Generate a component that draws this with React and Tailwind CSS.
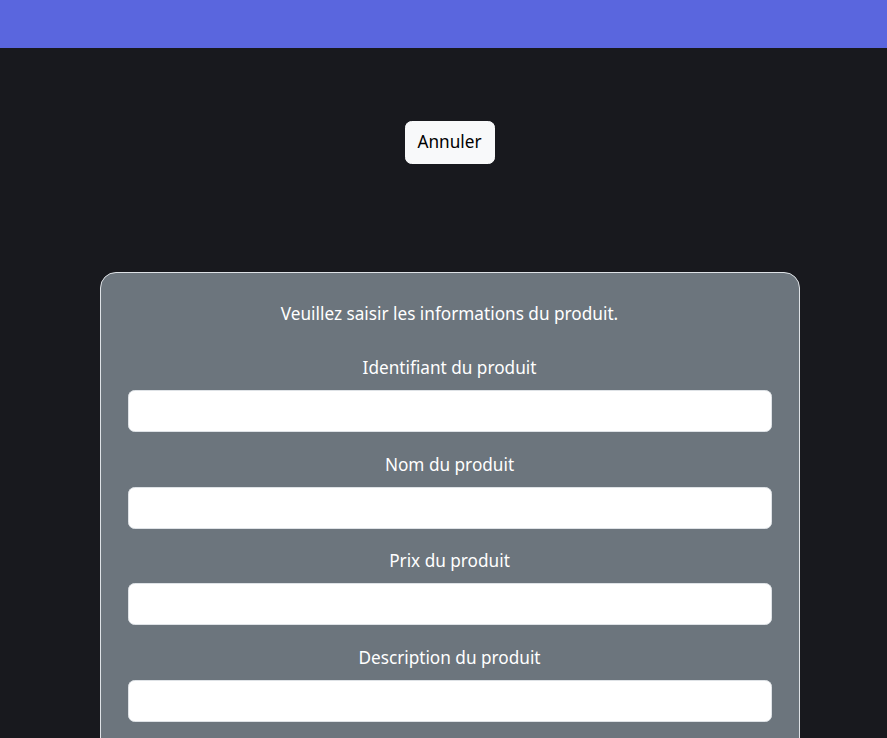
export default function App() {
  const fields = [
    "Identifiant du produit",
    "Nom du produit",
    "Prix du produit",
    "Description du produit",
  ];
  return (
    <div
      className="min-h-[738px] bg-[#18191e] text-[17.2px] leading-[26.4px]"
      style={{ fontFamily: '"Noto Sans", sans-serif' }}
    >
      <div className="h-[48px] bg-[#5a66de]" />
      <div className="pl-[12px]">
        <div className="flex justify-center pt-[73px]">
          <button className="h-[42.5px] w-[90px] rounded-[6.6px] bg-[#f8f9fa] text-[#000] border border-[#f8f9fa]">
            Annuler
          </button>
        </div>
        <div className="mt-[108.5px] mx-auto w-[700px] rounded-[16px] border border-[#dee2e6] bg-[#6c757d] px-[27px] pt-[28px] pb-[60px] text-white text-center">
          <p className="mb-[27.6px]">Veuillez saisir les informations du produit.</p>
          {fields.map((f) => (
            <div key={f} className="mb-[19.3px]">
              <label className="block mb-[8.8px]">{f}</label>
              <input
                type="text"
                className="block w-full h-[42px] rounded-[6.6px] border border-[#dee2e6] bg-white"
              />
            </div>
          ))}
        </div>
      </div>
    </div>
  );
}
